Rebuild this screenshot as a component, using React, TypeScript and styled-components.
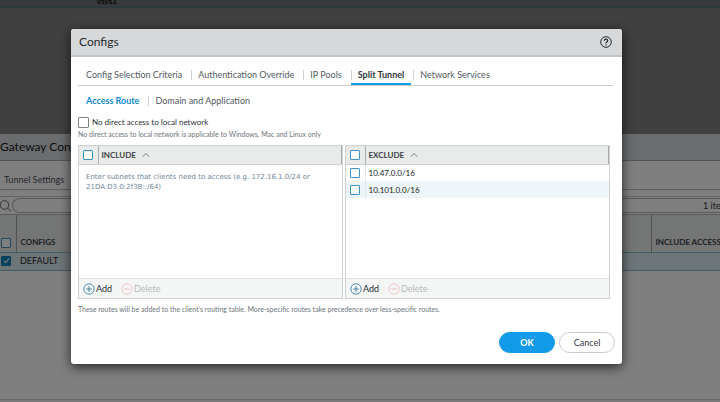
import React, { useState } from "react";
import styled, { createGlobalStyle, css } from "styled-components";

const GlobalStyle = createGlobalStyle`
  *, *::before, *::after { box-sizing: border-box; }
  html, body, #root { height: 100%; }
  body {
    margin: 0;
    overflow: hidden;
    background: #808080;
    font-family: Lato, "Liberation Sans", sans-serif;
    font-size: 9px;
    line-height: 12px;
    color: #333a40;
  }
  button, input { font: inherit; color: inherit; margin: 0; }
  button { padding: 0; border: 0; background: none; cursor: pointer; }
  table { border-collapse: collapse; }
`;

const Page = styled.div`
  position: relative;
  display: flex;
  flex-direction: column;
  height: 100%;
`;

const TopStrip = styled.div`
  flex: none;
  height: 8px;
  padding-left: 97px;
  overflow: hidden;
  background: #6d7478;
  border-bottom: 1px solid #4c7383;
  font-size: 8px;
  font-weight: 700;
  line-height: 12px;
  color: #111;
  display: flex;
  align-items: flex-end;
`;

const Gateway = styled.section`
  flex: 1;
  min-height: 0;
  margin-top: 126px;
  display: flex;
  flex-direction: column;
  background: #ffffff;
`;

const GatewayTitle = styled.h1`
  margin: 0;
  flex: none;
  height: 27px;
  background: #d7d8da;
  border-bottom: 1px solid #a9abad;
  font-size: 12px;
  font-weight: 400;
  line-height: 26px;
  color: #15181a;
  white-space: nowrap;
`;

const GatewayTabs = styled.div`
  flex: none;
  height: 29px;
  padding: 12px 4px 0;
  border-bottom: 1px solid #b9bcbe;
  line-height: 13px;
  color: #4a5157;
`;

const SearchRow = styled.label`
  flex: none;
  display: flex;
  align-items: center;
  height: 19px;
  margin-top: 6px;
  border-top: 1px solid #c4c8ca;
  border-bottom: 1px solid #b4b8ba;
  color: #5d6871;
`;

const SearchField = styled.span`
  flex: 1;
  display: flex;
  align-items: center;
  height: 15px;
  border: 1px solid #aeb4b8;
  border-right: 0;
  border-radius: 8px 0 0 8px;
`;

const SearchInput = styled.input`
  flex: 1;
  min-width: 0;
  padding: 0 8px;
  border: 0;
  background: transparent;
`;

const ItemCount = styled.span`
  flex: none;
  width: 17px;
  overflow: hidden;
  white-space: nowrap;
  color: #333;
`;

const GatewayTable = styled.table`
  flex: none;
  width: 100%;
  table-layout: fixed;
  white-space: nowrap;

  th {
    height: 37px;
    padding: 0 4px 4px;
    overflow: hidden;
    background: #e9eaeb;
    border-right: 1px solid #a0a3a5;
    text-align: left;
    vertical-align: bottom;
    font-size: 8px;
    font-weight: 700;
    color: #3d4349;
  }
  td {
    height: 18px;
    padding: 0 4px;
    background: #dcebf1;
    border-top: 1px solid #86b9d2;
    border-bottom: 1px solid #86b9d2;
    color: #1d2226;
  }
  th:first-child, td:first-child { width: 16px; padding-left: 1px; padding-right: 0; }
  th:last-child, td:last-child { width: 69px; border-right: 0; }
`;

const BottomEdge = styled.div`
  flex: none;
  height: 3px;
  margin-top: auto;
  border-top: 1px solid #cfcfcf;
  background: #f2f2f2;
`;

const Backdrop = styled.div`
  position: absolute;
  inset: 0;
  display: flex;
  flex-direction: column;
  padding: 29px 98px 38px 71px;
  background: rgba(0, 0, 0, 0.5);
`;

const Dialog = styled.section`
  flex: 1;
  display: flex;
  flex-direction: column;
  overflow: hidden;
  border-radius: 3px;
  background: #ffffff;
  box-shadow: 0 3px 12px rgba(0, 0, 0, 0.7);
`;

const DialogHeader = styled.header`
  display: flex;
  align-items: center;
  justify-content: space-between;
  height: 28px;
  padding: 0 10px 0 8px;
  background: #d7d8da;
  border-bottom: 2px solid #c2c4c6;
  color: #24292d;
`;

const DialogTitle = styled.h2`
  margin: 0;
  font-size: 12px;
  font-weight: 400;
  line-height: 16px;
`;

const IconButton = styled.button`
  display: flex;
`;

const DialogBody = styled.div`
  flex: 1;
  display: flex;
  flex-direction: column;
  padding: 8px 9px 11px 7px;
`;

const TabBar = styled.nav<{ $underlined?: boolean }>`
  display: flex;
  gap: 2px;
  height: ${(p) => (p.$underlined ? 21 : 29)}px;
  padding-left: 1px;
  align-items: stretch;
  ${(p) => p.$underlined && css`border-bottom: 1px solid #c5c9cb;`}
`;

const Tab = styled.button<{ $active?: boolean; $sub?: boolean }>`
  position: relative;
  padding: 0 7px;
  white-space: nowrap;
  color: #515a61;
  ${(p) => p.$active && css`
    font-weight: 700;
    color: ${p.$sub ? "#0a8ad2" : "#2f363b"};
  `}
  ${(p) => p.$active && !p.$sub && css`
    box-shadow: inset 0 -2px #109ae8;
  `}
  &:not(:first-child)::before {
    content: "";
    position: absolute;
    left: 0;
    top: calc(50% - 5px);
    height: 10px;
    border-left: 1px solid #cdd3d7;
  }
`;

const CheckLabel = styled.label`
  display: flex;
  align-items: center;
  gap: 3px;
  height: 14px;
  font-size: 8px;
  color: #2b3136;
`;

const Check = styled.input<{ $neutral?: boolean }>`
  appearance: none;
  display: block;
  flex: none;
  width: ${(p) => (p.$neutral ? 11 : 10)}px;
  height: ${(p) => (p.$neutral ? 11 : 10)}px;
  border: 1px solid ${(p) => (p.$neutral ? "#7d868d" : "#3d93c3")};
  border-radius: 1px;
  background: #ffffff;

  &:checked {
    border-color: #1182bd;
    background: #1182bd;
  }
  &:checked::after {
    content: "";
    display: block;
    width: 3px;
    height: 6px;
    margin: 0 auto;
    border: solid #ffffff;
    border-width: 0 1px 1px 0;
    transform: rotate(40deg);
  }
`;

const Note = styled.p`
  margin: 0;
  font-size: 7px;
  line-height: 10px;
  color: #6d757b;
`;

const Panels = styled.div`
  display: grid;
  grid-template-columns: 1fr 1fr;
  gap: 2px;
  height: 154px;
  margin: 6px 3px 5px 0;
`;

const Panel = styled.div`
  display: flex;
  flex-direction: column;
  border: 1px solid #cfd2d3;
`;

const RouteTable = styled.table`
  width: 100%;

  th, td {
    padding: 0 4px 0 3px;
    text-align: left;
    font-size: 8px;
  }
  th:first-child, td:first-child { width: 19px; padding-left: 4px; }
  th {
    height: 18px;
    background: #e9ebeb;
    border-bottom: 1px solid #d0d3d4;
  }
  th:first-child { border-right: 1px solid #a9adaf; }
  th:last-child { border-right: 1px solid #a9adaf; }
  td {
    height: 17px;
    color: #15191c;
  }
  td:first-child { border-right: 1px solid #e1e6e8; }
  tbody tr:nth-child(even) { background: #edf5f8; }
`;

const SortButton = styled.button`
  display: flex;
  align-items: center;
  gap: 6px;
  font-weight: 700;
  color: #3b4248;
`;

const Hint = styled.p`
  margin: 0;
  padding: 7px;
  font-family: "DejaVu Sans", sans-serif;
  font-size: 7px;
  line-height: 10px;
  color: #6f8799;
`;

const PanelFooter = styled.footer`
  display: flex;
  align-items: center;
  gap: 9px;
  height: 20px;
  margin-top: auto;
  padding: 0 4px;
  border-top: 1px solid #dfe2e3;
  background: #f4f6f6;
`;

const ActionButton = styled.button`
  display: flex;
  align-items: center;
  gap: 1px;
  color: #24292d;
  &:disabled { color: #b5b9bc; cursor: default; }
`;

const Actions = styled.div`
  display: flex;
  justify-content: flex-end;
  gap: 4px;
  margin-top: auto;
  margin-right: -2px;
`;

const PillButton = styled.button<{ $primary?: boolean }>`
  width: 56px;
  height: 21px;
  border: 1px solid ${(p) => (p.$primary ? "#109ae8" : "#c8cbcd")};
  border-radius: 11px;
  background: ${(p) => (p.$primary ? "#109ae8" : "#ffffff")};
  color: ${(p) => (p.$primary ? "#ffffff" : "#33393e")};
  font-weight: ${(p) => (p.$primary ? 700 : 400)};
`;

const SearchIcon = () => (
  <svg width="12" height="14" viewBox="0 0 12 14" fill="none" stroke="currentColor" aria-hidden="true">
    <circle cx="4.5" cy="6" r="4.3" />
    <path d="M7.7 9.2 11 12.5" />
  </svg>
);

const HelpIcon = () => (
  <svg width="12" height="12" viewBox="0 0 12 12" fill="none" stroke="currentColor" aria-hidden="true">
    <circle cx="6" cy="6" r="5.3" />
    <path d="M4.3 4.8C4.3 2.7 7.7 2.7 7.7 4.7C7.7 5.8 6 5.7 6 7.2" strokeWidth="1.3" />
    <circle cx="6" cy="8.8" r="0.7" fill="currentColor" stroke="none" />
  </svg>
);

const CaretIcon = () => (
  <svg width="8" height="6" viewBox="0 0 8 6" fill="none" stroke="#7e8589" aria-hidden="true">
    <path d="M.8 4.8 4 1.3 7.2 4.8" />
  </svg>
);

const CircleIcon = ({ plus }: { plus?: boolean }) => (
  <svg width="12" height="12" viewBox="0 0 12 12" fill="none" stroke={plus ? "#4283a5" : "#eebfc3"} aria-hidden="true">
    <circle cx="6" cy="6" r="5.2" strokeWidth=".9" />
    <path d={plus ? "M3.3 6h5.4M6 3.3v5.4" : "M3 6h6"} strokeWidth="1.1" />
  </svg>
);

const tabs = ["Config Selection Criteria", "Authentication Override", "IP Pools", "Split Tunnel", "Network Services"];
const subTabs = ["Access Route", "Domain and Application"];

function RoutePanel({ title, routes, hint }: { title: string; routes: string[]; hint?: string }) {
  return (
    <Panel>
      <RouteTable>
        <thead>
          <tr>
            <th><Check type="checkbox" aria-label={`Select all ${title.toLowerCase()} routes`} /></th>
            <th><SortButton>{title}<CaretIcon /></SortButton></th>
          </tr>
        </thead>
        <tbody>
          {routes.map((route) => (
            <tr key={route}>
              <td><Check type="checkbox" aria-label={route} /></td>
              <td>{route}</td>
            </tr>
          ))}
        </tbody>
      </RouteTable>
      {hint && <Hint>{hint}</Hint>}
      <PanelFooter>
        <ActionButton><CircleIcon plus />Add</ActionButton>
        <ActionButton disabled><CircleIcon />Delete</ActionButton>
      </PanelFooter>
    </Panel>
  );
}

export default function App() {
  const [tab, setTab] = useState("Split Tunnel");
  const [subTab, setSubTab] = useState("Access Route");

  return (
    <>
      <GlobalStyle />
      <Page>
        <TopStrip>vsys1</TopStrip>
        <Gateway>
          <GatewayTitle>Gateway Conf</GatewayTitle>
          <GatewayTabs>Tunnel Settings</GatewayTabs>
          <SearchRow>
            <SearchIcon />
            <SearchField>
              <SearchInput aria-label="Search configs" />
              <ItemCount>1 item</ItemCount>
            </SearchField>
          </SearchRow>
          <GatewayTable>
            <thead>
              <tr>
                <th><Check type="checkbox" aria-label="Select all configs" /></th>
                <th>CONFIGS</th>
                <th>INCLUDE ACCESS</th>
              </tr>
            </thead>
            <tbody>
              <tr>
                <td><Check type="checkbox" defaultChecked aria-label="DEFAULT" /></td>
                <td>DEFAULT</td>
                <td />
              </tr>
            </tbody>
          </GatewayTable>
          <BottomEdge />
        </Gateway>
        <Backdrop>
          <Dialog role="dialog" aria-labelledby="dialog-title">
            <DialogHeader>
              <DialogTitle id="dialog-title">Configs</DialogTitle>
              <IconButton aria-label="Help"><HelpIcon /></IconButton>
            </DialogHeader>
            <DialogBody>
              <TabBar $underlined>
                {tabs.map((name) => (
                  <Tab key={name} $active={name === tab} onClick={() => setTab(name)}>{name}</Tab>
                ))}
              </TabBar>
              <TabBar>
                {subTabs.map((name) => (
                  <Tab key={name} $sub $active={name === subTab} onClick={() => setSubTab(name)}>{name}</Tab>
                ))}
              </TabBar>
              <CheckLabel>
                <Check type="checkbox" $neutral />
                No direct access to local network
              </CheckLabel>
              <Note>No direct access to local network is applicable to Windows, Mac and Linux only</Note>
              <Panels>
                <RoutePanel
                  title="INCLUDE"
                  routes={[]}
                  hint="Enter subnets that clients need to access (e.g. 172.16.1.0/24 or 21DA:D3:0:2f3B::/64)"
                />
                <RoutePanel title="EXCLUDE" routes={["10.47.0.0/16", "10.101.0.0/16"]} />
              </Panels>
              <Note>These routes will be added to the client's routing table. More-specific routes take precedence over less-specific routes.</Note>
              <Actions>
                <PillButton $primary>OK</PillButton>
                <PillButton>Cancel</PillButton>
              </Actions>
            </DialogBody>
          </Dialog>
        </Backdrop>
      </Page>
    </>
  );
}
